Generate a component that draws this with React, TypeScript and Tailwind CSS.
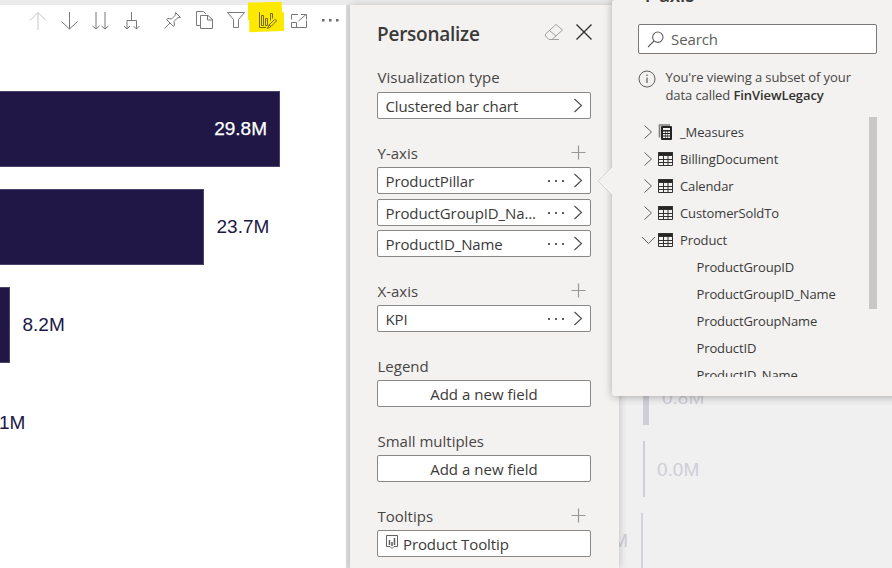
import React from "react";

const ui = "font-['Open_Sans','Noto_Sans',sans-serif]";

function Glyph({ x, children, className = "" }: { x: number; children: React.ReactNode; className?: string }) {
  return (
    <svg
      width="20"
      height="22"
      viewBox={`${x} 9 20 22`}
      fill="none"
      stroke="#7a7978"
      strokeWidth="1"
      className={`relative shrink-0 ${className}`}
    >
      {children}
    </svg>
  );
}

function Toolbar() {
  return (
    <div className="relative flex h-[30px] gap-[11px] pl-7 pt-1">
      <svg className="absolute -top-1 left-[247px]" width="38" height="34" viewBox="247 1 38 34">
        <path d="M248 2.5 281.6 1.8 282 12.3H284V31L267 31.6 249.3 32.3V20H248Z" fill="#fde900" />
      </svg>
      <Glyph x={28}>
        <path d="M38 30V13M30 20.5 38 12.5 46 20.5" stroke="#c6c5c4" />
      </Glyph>
      <Glyph x={59}>
        <path d="M69.5 12V29M61.5 21.5 69.5 29 77.5 21.5" />
      </Glyph>
      <Glyph x={90}>
        <path d="M96 12V29M92.5 26 96 29 99.5 26M105 12V29M101.5 26 105 29 108.5 26" />
      </Glyph>
      <Glyph x={121}>
        <path d="M131.5 12V20.5M127 29V20.5H136.5V29M124 26 127 29 130 26M133.5 26 136.5 29 139.5 26" />
      </Glyph>
      <Glyph x={162} className="ml-[10px]">
        <path d="M164.5 28.5 170 23M166.5 19.5 173.5 26.5 174.5 25 174 21.5 177.5 17.8 180.5 17.5 175.5 12.5 175 15.5 171.5 19 168 18.5Z" />
      </Glyph>
      <Glyph x={194} className="ml-px">
        <path d="M200.5 25.5H196.5V11.5H203.5L206 14M200.5 15.5H208L212.5 19.5V28.5H200.5ZM207.5 15.5V20H212.5" />
      </Glyph>
      <Glyph x={226} className="ml-px">
        <path d="M227.5 12.5H244.5L238.5 19.5V27.5H233.5V19.5Z" />
      </Glyph>
      <Glyph x={257}>
        <path
          d="M259.5 12V27.5H266M261.5 15.5H263.5V25.5H261.5ZM265.5 18.5H267.5V25.5H265.5ZM270.5 20.5V13.5H272.5V18.5M267.5 28.5 269 25 274.5 19.7Q276 19 276.5 21L271 26.5ZM269 25 271 26.5"
          stroke="#756c1a"
        />
      </Glyph>
      <Glyph x={289} className="ml-px">
        <path d="M291.5 19.5V14.5H298M306.5 20.5V27.5H291.5V22.5H296.5V27.5M298.5 21 306 14.5M301 14.5H306.5V19.5" />
      </Glyph>
      <Glyph x={320}>
        <path d="M322 19h2.5v2.5h-2.5zM329 19h2.5v2.5h-2.5zM336 19h2.5v2.5h-2.5z" fill="#6b6a69" stroke="none" />
      </Glyph>
    </div>
  );
}

function ChartCard() {
  return (
    <section className="flex w-[346px] shrink-0 flex-col bg-white font-['Liberation_Sans',Arial,sans-serif] text-[19px] text-[#201747]">
      <Toolbar />
      <div className="mt-[56px] flex flex-col gap-[22px]">
        <div className="flex h-[76px] items-center">
          <div className="flex h-full w-[280px] items-center justify-end border border-l-0 border-[#4a436a] bg-[#201747] pr-3 pt-px text-white [-webkit-text-stroke:0.25px_white]">
            29.8M
          </div>
        </div>
        <div className="flex h-[76px] items-center gap-[12.5px]">
          <div className="h-full w-[204px] border border-l-0 border-[#4a436a] bg-[#201747]" />
          <span className="pt-px">23.7M</span>
        </div>
        <div className="flex h-[76px] items-center gap-[12.5px]">
          <div className="h-full w-[10px] border border-l-0 border-[#4a436a] bg-[#201747]" />
          <span className="pt-px">8.2M</span>
        </div>
        <div className="flex h-[76px] items-center">
          <span className="-ml-px pt-px">1M</span>
        </div>
      </div>
    </section>
  );
}

function Chevron() {
  return (
    <svg width="10" height="15" viewBox="0 0 10 15" fill="none" stroke="#4a4948" strokeWidth="1.1" className="shrink-0">
      <path d="M1.5 1 8.5 7.5 1.5 14" />
    </svg>
  );
}

function Field({ name, dots = true, className = "" }: { name: string; dots?: boolean; className?: string }) {
  return (
    <div className={`flex h-[27px] items-center rounded-[2px] border border-[#8a8886] bg-white pl-[7.5px] pr-[7px] ${className}`}>
      <span className="grow whitespace-nowrap pt-px">{name}</span>
      {dots && (
        <svg width="18" height="4" viewBox="0 0 18 4" fill="#605e5c" className="mr-2 shrink-0">
          <path d="M1 1h2v2h-2zM8 1h2v2h-2zM15 1h2v2h-2z" />
        </svg>
      )}
      <Chevron />
    </div>
  );
}

function Label({ text, plus = false, className = "pt-[2px]" }: { text: string; plus?: boolean; className?: string }) {
  return (
    <div className="flex h-[30px] items-center justify-between pr-[6px] tracking-[0px] text-[#484644]">
      <span className={`pl-[0.5px] ${className}`}>{text}</span>
      {plus && (
        <svg width="15" height="15" viewBox="0 0 15 15" stroke="#9a9896" strokeWidth="1.2" className="-mr-px">
          <path d="M7.5 0.5V14.5M0.5 7.5H14.5" />
        </svg>
      )}
    </div>
  );
}

function AddField() {
  return (
    <button className="flex h-[27px] w-full items-center justify-center rounded-[2px] border border-[#8a8886] bg-white pt-px tracking-[0.02px]">
      Add a new field
    </button>
  );
}

function Personalize() {
  return (
    <aside className={`relative z-10 flex w-[269px] shrink-0 flex-col bg-[#f3f2f1] pl-[27px] pr-7 text-[15px] tracking-[-0.11px] text-[#3b3a39] shadow-[1px_0_7px_rgba(0,0,0,0.18)] ${ui}`}>
      <header className="flex h-[57px] items-center">
        <h1 className="grow pt-px text-[19px] font-semibold tracking-[-0.25px]">Personalize</h1>
        <svg width="20" height="18" viewBox="0 0 20 18" fill="none" stroke="#a19f9d" className="mr-[11px] -mt-1">
          <path d="M1.5 11 12 1.5 18.5 7 8 16.5H5L1.5 13ZM5.5 7.5 12 13M5 16.5H15" />
        </svg>
        <svg width="18" height="18" viewBox="0 0 18 18" stroke="#323130" strokeWidth="1.4" className="-mr-[2px] -mt-1">
          <path d="M1.5 1.5 16.5 16.5M16.5 1.5 1.5 16.5" />
        </svg>
      </header>
      <div className="flex flex-col gap-[18px]">
        <div>
          <Label text="Visualization type" className="pt-0" />
          <Field name="Clustered bar chart" dots={false} />
        </div>
        <div>
          <Label text="Y-axis" plus />
          <Field name="ProductPillar" />
          <Field name="ProductGroupID_Na..." className="mt-[5px]" />
          <Field name="ProductID_Name" className="mt-1" />
        </div>
        <div>
          <Label text="X-axis" plus />
          <Field name="KPI" />
        </div>
        <div>
          <Label text="Legend" />
          <AddField />
        </div>
        <div>
          <Label text="Small multiples" />
          <AddField />
        </div>
        <div>
          <Label text="Tooltips" plus />
          <div className="flex h-[27px] items-center gap-1 rounded-[2px] border border-[#8a8886] bg-white pl-[7px]">
            <svg width="14" height="15" viewBox="0 0 14 15" fill="none" stroke="#605e5c" className="-mt-1">
              <path d="M5 12.5H1.5V1.5H12.5V12.5H9L7 14.5 5 12.5" />
              <path d="M4.5 6V11M7 8V12M9.5 4V11" strokeWidth="1.5" />
            </svg>
            <span className="pt-px">Product Tooltip</span>
          </div>
        </div>
      </div>
    </aside>
  );
}

function FadedChart() {
  return (
    <section className="flex grow flex-col overflow-hidden bg-[#f0f0f0] pt-[365px] font-['Liberation_Sans',Arial,sans-serif] text-[19px] text-[#cfcdd5]">
      <div className="flex h-[56px] items-center pl-6">
        <div className="h-full w-[6px] bg-[#cfcdd6]" />
        <span className="ml-[13px] pt-[2px]">0.8M</span>
      </div>
      <div className="mt-4 flex h-[56px] items-center pl-6">
        <div className="h-full w-[2px] bg-[#cfcdd6]" />
        <span className="ml-3 pt-[2px]">0.0M</span>
      </div>
      <div className="mt-4 flex h-[56px] items-center">
        <div className="flex w-[9px] justify-end">
          <span className="pt-[2px]">2.1M</span>
        </div>
        <div className="ml-[13px] h-full w-[2px] bg-[#d4d2da]" />
      </div>
    </section>
  );
}

function TableIcon() {
  return (
    <svg width="15" height="14" viewBox="0 0 15 14" fill="none" stroke="#323130">
      <path d="M0.5 0.5H14.5V13.5H0.5ZM0 7.5H15M0 10.5H15M5.5 4V14M10 4V14" />
      <path d="M0.5 0.5H14.5V3.5H0.5Z" fill="#252423" />
    </svg>
  );
}

function MeasuresIcon() {
  return (
    <svg width="15" height="16" viewBox="0 0 15 16">
      <path d="M1.5 13.5V1H12" fill="none" stroke="#807e7c" strokeWidth="1.6" />
      <rect x="3" y="2" width="11" height="14" rx="1" fill="#252423" />
      <path d="M5 4h7v2h-7zM5 7.5h2v1.5h-2zM7.6 7.5h1.9v1.5h-1.9zM10.1 7.5h1.9v1.5h-1.9zM5 10h2v1.5h-2zM7.6 10h1.9v1.5h-1.9zM10.1 10h1.9v1.5h-1.9zM5 12.5h2v1.5h-2zM7.6 12.5h1.9v1.5h-1.9zM10.1 12.5h1.9v1.5h-1.9z" fill="#f3f2f1" />
    </svg>
  );
}

const tables = ["_Measures", "BillingDocument", "Calendar", "CustomerSoldTo", "Product"];
const columns = ["ProductGroupID", "ProductGroupID_Name", "ProductGroupName", "ProductID", "ProductID_Name"];

function Flyout() {
  return (
    <div className={`absolute left-[612px] top-0 z-20 h-[396px] w-[290px] rounded-[3px] bg-[#f3f2f1] text-[13px] tracking-[-0.12px] text-[#3b3a39] shadow-[0_1px_8px_rgba(0,0,0,0.3)] ${ui}`}>
      <svg className="absolute -left-[15px] top-[166px]" width="16" height="30" viewBox="0 0 16 30">
        <path d="M15.5 0.5 1 15 15.5 29.5" fill="#f3f2f1" stroke="#d6d5d4" />
        <path d="M16 1 2 15 16 29Z" fill="#f3f2f1" />
      </svg>
      <div className="flow-root h-6 pl-[30px]">
        <h2 className="-mt-[19px] text-[19px] font-semibold leading-[28px] tracking-[-0.2px]">Y-axis</h2>
      </div>
      <div className="ml-[26px] flex h-[30px] w-[239px] items-center gap-2 rounded-[2px] border border-[#7a7977] bg-white pl-2 text-[15px] tracking-[-0.1px] text-[#605e5c]">
        <svg width="17" height="17" viewBox="0 0 17 17" fill="none" stroke="#605e5c" strokeWidth="1.1">
          <circle cx="10.8" cy="6.2" r="5.2" />
          <path d="M7 10 1 16" />
        </svg>
        <span className="-ml-px">Search</span>
      </div>
      <div className="mt-[14px] flex pl-[26px]">
        <svg width="18" height="18" viewBox="0 0 18 18" fill="none" stroke="#605e5c" className="mt-[2px] shrink-0">
          <circle cx="9" cy="9" r="8" />
          <path d="M9 7.5V13M9 4.5V6" strokeWidth="1.2" />
        </svg>
        <p className="ml-[9.5px] leading-[18px] text-[#484644] tracking-[-0.09px]">
          You're viewing a subset of your
          <br />
          data called <b className="font-semibold text-[#323130]">FinViewLegacy</b>
        </p>
      </div>
      <div className="mt-[13px] flex">
        <div className="mt-[2px] h-[258px] w-[257px] overflow-hidden">
          {tables.map((t, i) => (
            <div key={t} className="flex h-[27px] items-center pl-[31px]">
              <svg width="14" height="14" viewBox="0 0 14 14" fill="none" stroke="#605e5c" className="-mt-[2px] mr-[2px] -ml-[1px]">
                {i === 4 ? <path d="M0 4 6.5 10.5 13 4" /> : <path d="M2.5 0.5 9.5 7 2.5 13.5" />}
              </svg>
              <span className="-mt-px flex w-[22px]">{i === 0 ? <MeasuresIcon /> : <TableIcon />}</span>
              <span>{t}</span>
            </div>
          ))}
          {columns.map((c) => (
            <div key={c} className="flex h-[27px] items-center pl-[84.5px]">
              {c}
            </div>
          ))}
        </div>
        <div className="h-[192px] w-2 bg-[#c8c8c8]" />
      </div>
    </div>
  );
}

export default function App() {
  return (
    <div className="relative flex h-[568px] w-[892px] flex-col overflow-hidden bg-[#ebebeb]">
      <div className="h-[5px] shrink-0" />
      <main className="flex min-h-0 grow">
        <ChartCard />
        <div className="w-1 shrink-0 bg-[#dadada]" />
        <Personalize />
        <FadedChart />
      </main>
      <Flyout />
    </div>
  );
}
